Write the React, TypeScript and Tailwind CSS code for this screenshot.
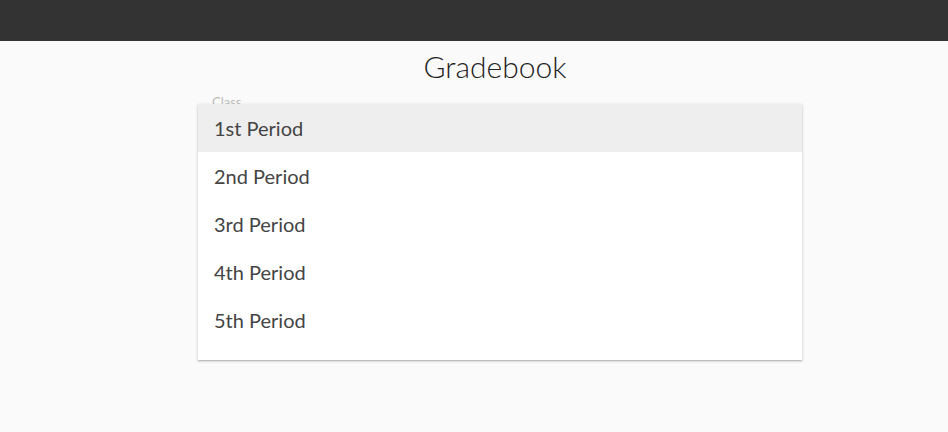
export default function App() {
  const items = ["1st Period", "2nd Period", "3rd Period", "4th Period", "5th Period"];
  return (
    <div className="w-[948px] h-[432px] bg-[#fafafa] overflow-hidden" style={{ fontFamily: "Lato, 'Open Sans', sans-serif" }}>
      <div className="h-[41px] bg-[#333333]" />
      <div className="ml-[198px] w-[604px]">
        <h1 className="text-center text-[30px] font-light h-[52px] leading-[50px] text-[#222] pr-[10px]">Gradebook</h1>
        <div className="relative">
          <div className="pl-[14px] text-[13px] leading-[16px] text-[#bbb] h-[11px] overflow-hidden pt-[1px]">Class</div>
          <div className="bg-white shadow-[0_1px_3px_rgba(0,0,0,0.2),0_1px_1px_rgba(0,0,0,0.14)] pb-[16px]">
            {items.map((it, i) => (
              <div key={it} className={`h-[48px] flex items-center pl-[16px] pb-[1px] text-[20px] text-[#444] ${i === 0 ? "bg-[#eeeeee]" : ""}`}>
                {it}
              </div>
            ))}
          </div>
        </div>
      </div>
    </div>
  );
}
